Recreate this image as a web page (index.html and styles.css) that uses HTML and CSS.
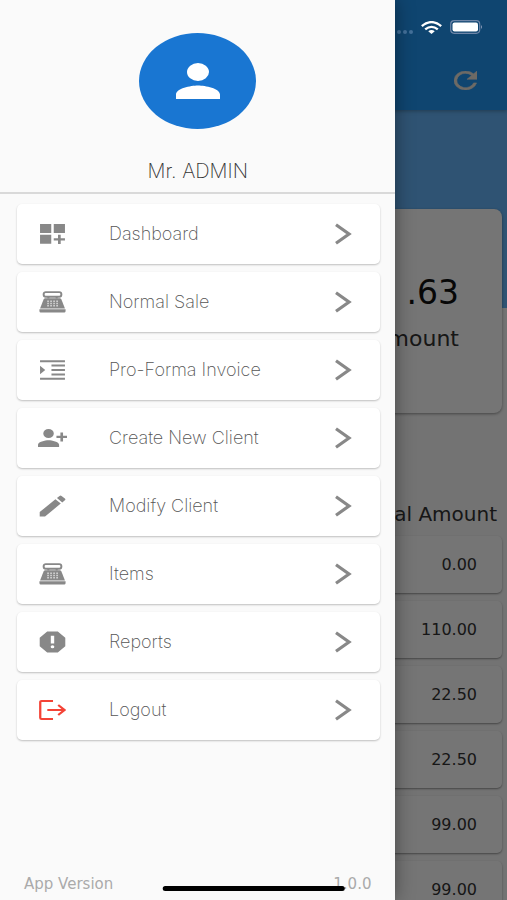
FILE: index.html
```html
<!DOCTYPE html>
<html lang="en">
<head>
<meta charset="utf-8">
<meta name="viewport" content="width=device-width, initial-scale=1">
<title>Menu</title>
<link rel="stylesheet" href="styles.css">
</head>
<body>
<svg width="0" height="0" class="sprite" aria-hidden="true">
  <symbol id="chevron" viewBox="0 0 18 22" preserveAspectRatio="none"><path d="M2 1.800L15 11L2 20.200" fill="none" stroke="currentColor" stroke-width="3.200"/></symbol>
  <symbol id="register" viewBox="0 0 26 22" preserveAspectRatio="none">
    <rect x="4.500" y="1.100" width="17" height="4.600" rx="2" fill="none" stroke="currentColor" stroke-width="1.900"/>
    <path d="M8 5.500h2v2H8zM16 5.500h2v2h-2z" fill="currentColor"/>
    <path fill="currentColor" d="M6.500 7.300h13c1 0 1.700.5 2.100 1.300L25 17.500H1L4.400 8.600c.4-.8 1.100-1.300 2.100-1.300z"/>
    <path fill="currentColor" d="M.4 18.200h25.200v1.800c0 1-.7 1.600-1.700 1.600H2.100C1.100 21.600.4 21 .4 20z"/>
    <path d="M8.700 9.500v6M11.600 9.500v6M14.500 9.500v6M17.400 9.500v6" stroke="#fff" stroke-width="1" stroke-dasharray="1.500 .8"/>
  </symbol>
</svg>
<div class="screen">
  <main class="page">
    <header class="appbar">
      <button class="refresh" type="button" aria-label="Refresh"><svg viewBox="4 4 16 16" preserveAspectRatio="none"><path fill="currentColor" stroke="currentColor" stroke-width=".4" d="M17.650 6.350A7.960 7.960 0 0 0 12 4a8 8 0 1 0 7.730 10h-2.080A6 6 0 1 1 12 6c1.660 0 3.140.69 4.220 1.780L13 11h7V4z"/></svg></button>
    </header>
    <section class="hero">
      <div class="summary">
        <strong class="total">.63</strong>
        <span class="caption">Amount</span>
      </div>
    </section>
    <section class="sales">
      <h2 class="heading">Total Amount</h2>
      <ul class="list">
        <li class="row">0.00</li>
        <li class="row">110.00</li>
        <li class="row">22.50</li>
        <li class="row">22.50</li>
        <li class="row">99.00</li>
        <li class="row">99.00</li>
      </ul>
    </section>
  </main>
  <div class="scrim"></div>
  <div class="status" aria-hidden="true">
    <span class="dots"><i></i><i></i><i></i><i></i></span>
    <svg class="wifi" viewBox="0 0 20 13" preserveAspectRatio="none"><g fill="none" stroke="#fff" stroke-width="2.300"><path d="M.8 5.200Q10-3 19.200 5.200"/><path d="M4 8.400q6-5 12 0"/></g><path fill="#fff" d="M6.900 10.200q3.100-2.200 6.200 0L10 13z"/></svg>
    <svg class="battery" viewBox="0 0 33 14"><rect x=".7" y=".7" width="29" height="12.600" rx="3.500" fill="none" stroke="#6f86a8" stroke-width="1.200"/><rect x="2.500" y="2.400" width="25.500" height="9.200" rx="2" fill="#fff"/><path d="M31 5q2 2 0 4z" fill="#8a9ab8"/></svg>
  </div>
  <aside class="drawer">
    <header class="profile">
      <span class="avatar"><svg viewBox="4 4 16 16" preserveAspectRatio="none"><path fill="#fff" d="M12 12a4 4 0 1 0 0-8 4 4 0 0 0 0 8zm0 2c-2.670 0-8 1.340-8 4v2h16v-2c0-2.660-5.330-4-8-4z"/></svg></span>
      <span class="name">Mr. ADMIN</span>
    </header>
    <nav class="menu">
      <a class="item" href="#dashboard"><svg class="icon" viewBox="0 0 26 22" preserveAspectRatio="none"><path fill="currentColor" d="M1 1h10.800v9H1zM14.200 1H25v9H14.200zM1 11.800h10.800v9H1zM18.300 11.800h2.600v3.500H25v2.200h-4.100v3.500h-2.600v-3.500h-4.100v-2.200h4.100z"/></svg><span class="label">Dashboard</span><svg class="chevron"><use href="#chevron"/></svg></a>
      <a class="item" href="#sale"><svg class="icon"><use href="#register"/></svg><span class="label">Normal Sale</span><svg class="chevron"><use href="#chevron"/></svg></a>
      <a class="item" href="#invoice"><svg class="icon" viewBox="0 0 26 22" preserveAspectRatio="none"><path fill="currentColor" d="M1 1.200h24v2H1zM12 5.600h13v2H12zM12 10h13v2H12zM12 14.400h13v2H12zM1 18.800h24v2H1zM1 6.800v8.400L6 11z"/></svg><span class="label">Pro-Forma Invoice</span><svg class="chevron"><use href="#chevron"/></svg></a>
      <a class="item" href="#create"><svg class="icon icon-wide" viewBox="1 4 22 16" preserveAspectRatio="none"><path fill="currentColor" d="M9 12a4 4 0 1 0 0-8 4 4 0 0 0 0 8zm0 2c-2.670 0-8 1.340-8 4v2h16v-2c0-2.660-5.330-4-8-4zM20 10V7h-2v3h-3v2h3v3h2v-3h3v-2z"/></svg><span class="label">Create New Client</span><svg class="chevron"><use href="#chevron"/></svg></a>
      <a class="item" href="#modify"><svg class="icon" viewBox="2.500 2.500 19 19" preserveAspectRatio="none"><path fill="currentColor" d="M3 17.250V21h3.750L17.810 9.940l-3.750-3.750zM20.710 7.040a1 1 0 0 0 0-1.410l-2.340-2.340a1 1 0 0 0-1.410 0l-1.830 1.830 3.750 3.750z"/></svg><span class="label">Modify Client</span><svg class="chevron"><use href="#chevron"/></svg></a>
      <a class="item" href="#items"><svg class="icon"><use href="#register"/></svg><span class="label">Items</span><svg class="chevron"><use href="#chevron"/></svg></a>
      <a class="item" href="#reports"><svg class="icon" viewBox="2.500 2.500 19 19" preserveAspectRatio="none"><path fill="currentColor" fill-rule="evenodd" d="M15.730 3H8.270L3 8.270v7.460L8.270 21h7.460L21 15.730V8.270zM10.800 6.700h2.400v6.500h-2.400zM12 17.300a1.300 1.300 0 1 1 0-2.600 1.300 1.300 0 0 1 0 2.600z"/></svg><span class="label">Reports</span><svg class="chevron"><use href="#chevron"/></svg></a>
      <a class="item" href="#logout"><svg class="icon icon-logout" viewBox="0 0 26 22" preserveAspectRatio="none"><path fill="none" stroke="currentColor" stroke-width="2.200" d="M13.500 2H2.500Q1.200 2 1.200 3.300V18.700Q1.200 20 2.500 20H13.500M8 11H24M18.500 6L24.500 11L18.500 16"/></svg><span class="label">Logout</span><svg class="chevron"><use href="#chevron"/></svg></a>
    </nav>
    <footer class="version"><span>App Version</span><span>1.0.0</span></footer>
  </aside>
  <div class="home-bar"></div>
</div>
</body>
</html>
```
FILE: styles.css
```css
* { box-sizing: border-box; }

body {
  margin: 0;
  font-family: Inter, "Liberation Sans", sans-serif;
  background: #fafafa;
}

.sprite { position: absolute; }

.screen {
  position: relative;
  min-height: 100vh;
  overflow: hidden;
}

/* Page behind the drawer */
.page {
  height: 100vh;
  overflow: hidden;
  background: #fafafa;
  color: #333;
  font-family: "DejaVu Sans", Inter, sans-serif;
}

.appbar {
  display: flex;
  justify-content: flex-end;
  align-items: flex-end;
  height: 110px;
  padding: 0 30px 20px 0;
  background: #2196f3;
  position: relative;
  box-shadow: 0 1px 4px rgba(0, 0, 0, .3);
}

.refresh {
  display: flex;
  padding: 0;
  border: 0;
  background: none;
  color: #eee6dc;
}

.refresh svg { width: 23px; height: 19px; }

.hero {
  padding: 99px 5px 0;
  background: linear-gradient(#66b5fa 198px, #fafafa 198px);
}

.summary {
  display: flex;
  flex-direction: column;
  align-items: flex-end;
  gap: 10px;
  height: 204px;
  padding: 64px 43px 0 0;
  border-radius: 8px;
  background: #fff;
  box-shadow: 0 1px 3px rgba(0, 0, 0, .4);
}

.total {
  font-size: 33px;
  line-height: 40px;
  font-weight: 400;
  color: #111;
}

.caption {
  font-size: 22px;
  line-height: 32px;
}

.sales { padding: 85px 5px 0; }

.heading {
  margin: 0;
  padding-right: 5px;
  font-size: 20px;
  line-height: 32px;
  font-weight: 400;
  text-align: right;
}

.list {
  display: grid;
  gap: 8px;
  margin: 0;
  padding: 6px 0 0;
  list-style: none;
}

.row {
  height: 57px;
  padding-right: 25px;
  border-radius: 5px;
  background: #fff;
  box-shadow: 0 1px 2px rgba(0, 0, 0, .4);
  font-size: 16px;
  line-height: 57px;
  text-align: right;
}

.scrim {
  position: absolute;
  inset: 0;
  background: rgba(0, 0, 0, .54);
}

.status {
  position: absolute;
  top: 20px;
  right: 24px;
  display: flex;
  align-items: center;
  gap: 8px;
}

.dots { display: flex; gap: 2px; padding-top: 10px; }
.dots i { width: 4px; height: 4px; border-radius: 50%; background: #44719a; }
.wifi { width: 21px; height: 13px; }
.battery { width: 33px; height: 14px; }

/* Drawer */
.drawer {
  position: absolute;
  inset: 0 auto 0 0;
  display: flex;
  flex-direction: column;
  width: 78%;
  background: #fafafa;
  box-shadow: 0 0 18px rgba(0, 0, 0, .4);
}

.profile {
  display: flex;
  flex-direction: column;
  align-items: center;
  gap: 26px;
  padding: 33px 0 5px;
  border-bottom: 2px solid #d9d9d9;
}

.avatar {
  display: grid;
  place-items: center;
  width: 117px;
  height: 96px;
  border-radius: 50%;
  background: #1976d2;
}

.avatar svg { width: 44px; height: 36px; }

.name {
  font-size: 20px;
  line-height: 32px;
  font-weight: 200;
  color: #333;
}

.menu {
  display: grid;
  gap: 8px;
  padding: 10px 15px 0 17px;
}

.item {
  display: flex;
  align-items: center;
  height: 60px;
  padding: 0 28px 1px 22px;
  border-radius: 5px;
  background: #fff;
  box-shadow: 0 1px 2px rgba(0, 0, 0, .24);
  color: #888;
  text-decoration: none;
}

.icon { width: 27px; height: 22px; flex: none; }
.icon-wide { width: 29px; height: 18px; margin: 0 -1px; }
.icon-logout { color: #f44336; }

.label {
  flex: 1;
  padding-left: 43px;
  font-size: 18px;
  line-height: 24px;
  font-weight: 200;
  color: #555;
}

.chevron { width: 18px; height: 22px; flex: none; color: #888; }

.version {
  display: flex;
  justify-content: space-between;
  margin-top: auto;
  padding: 0 24px 6px;
  font-family: "DejaVu Sans", Inter, sans-serif;
  font-size: 15px;
  line-height: 20px;
  color: #aaa;
}

.home-bar {
  position: absolute;
  bottom: 9px;
  left: 50%;
  width: 36%;
  height: 5px;
  border-radius: 3px;
  background: #000;
  transform: translateX(-50%);
}
```
